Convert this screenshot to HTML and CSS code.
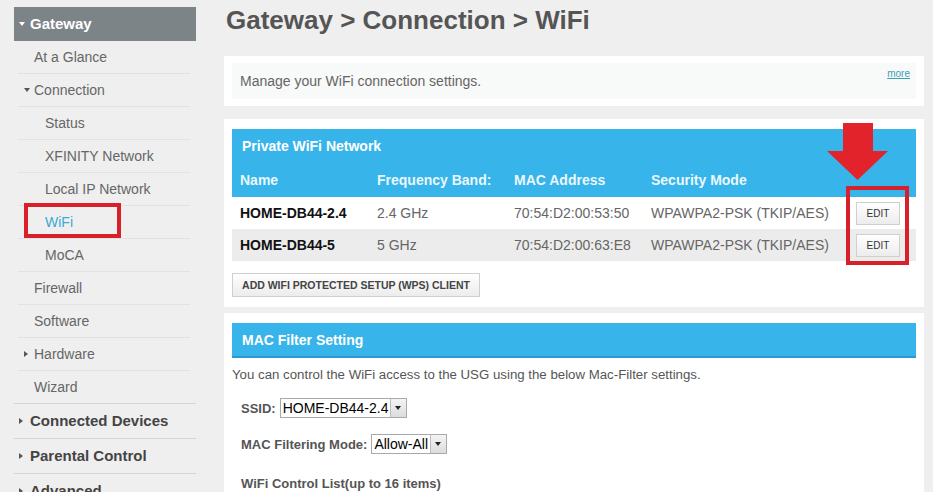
FILE: index.html
```html
<!DOCTYPE html>
<html lang="en">
<head>
    <meta charset="UTF-8">
    <title>Gateway > Connection > WiFi</title>
    <link rel="stylesheet" href="styles.css">
</head>
<body>
    <div class="page">
        <nav class="sidebar">
            <div class="nav-head"><span class="caret down light"></span>Gateway</div>
            <ul class="nav-sub">
                <li class="lvl1">At a Glance</li>
                <li class="lvl1 has-caret"><span class="caret down"></span>Connection</li>
                <li class="lvl2">Status</li>
                <li class="lvl2">XFINITY Network</li>
                <li class="lvl2">Local IP Network</li>
                <li class="lvl2 active">WiFi<span class="mark-box"></span></li>
                <li class="lvl2">MoCA</li>
                <li class="lvl1">Firewall</li>
                <li class="lvl1">Software</li>
                <li class="lvl1 has-caret"><span class="caret right"></span>Hardware</li>
                <li class="lvl1">Wizard</li>
            </ul>
            <ul class="nav-top">
                <li><span class="caret right dark"></span>Connected Devices</li>
                <li><span class="caret right dark"></span>Parental Control</li>
                <li><span class="caret right dark"></span>Advanced</li>
            </ul>
        </nav>

        <main class="content">
            <h1>Gateway &gt; Connection &gt; WiFi</h1>

            <div class="panel intro">
                <div class="intro-inner">
                    Manage your WiFi connection settings.
                    <a class="more" href="#">more</a>
                </div>
            </div>

            <div class="panel wifi">
                <div class="blue-head">
                    <div class="head-title">Private WiFi Network</div>
                    <div class="grid-row cols">
                        <span>Name</span>
                        <span>Frequency Band:</span>
                        <span>MAC Address</span>
                        <span>Security Mode</span>
                        <span></span>
                    </div>
                </div>
                <div class="grid-row data">
                    <span class="ssid">HOME-DB44-2.4</span>
                    <span>2.4 GHz</span>
                    <span>70:54:D2:00:53:50</span>
                    <span>WPAWPA2-PSK (TKIP/AES)</span>
                    <span><button class="btn edit">EDIT</button></span>
                </div>
                <div class="grid-row data odd">
                    <span class="ssid">HOME-DB44-5</span>
                    <span>5 GHz</span>
                    <span>70:54:D2:00:63:E8</span>
                    <span>WPAWPA2-PSK (TKIP/AES)</span>
                    <span><button class="btn edit">EDIT</button></span>
                </div>
                <button class="btn wps">ADD WIFI PROTECTED SETUP (WPS) CLIENT</button>

                <svg class="arrow" width="61" height="57" viewBox="0 0 61 57">
                    <polygon points="16,0 46,0 46,28 61,28 30.5,57 0,28 16,28" fill="#e3232b"/>
                </svg>
                <div class="edit-box"></div>
            </div>

            <div class="panel mac">
                <div class="blue-head single">
                    <div class="head-title">MAC Filter Setting</div>
                </div>
                <p class="note">You can control the WiFi access to the USG using the below Mac-Filter settings.</p>
                <div class="field ssid-field">
                    <label>SSID:</label>
                    <span class="fake-select"><span class="val">HOME-DB44-2.4</span><span class="drop"></span></span>
                </div>
                <div class="field mode-field">
                    <label>MAC Filtering Mode:</label>
                    <span class="fake-select"><span class="val">Allow-All</span><span class="drop"></span></span>
                </div>
                <div class="field list-title">WiFi Control List(up to 16 items)</div>
            </div>
        </main>
    </div>
</body>
</html>
```

FILE: styles.css
```css
body {
    margin: 0;
    background-color: #efefef;
    font-family: "Liberation Sans", Arial, sans-serif;
    color: #666;
    overflow: hidden;
}
.page {
    display: flex;
    padding-left: 14px;
}

/* sidebar */
.sidebar {
    width: 182px;
    padding-top: 7px;
}
.nav-head {
    height: 34px;
    line-height: 34px;
    background-color: #7d8488;
    color: #fff;
    font-size: 15px;
    font-weight: bold;
    padding-left: 5px;
}
.nav-sub, .nav-top {
    list-style: none;
    margin: 0;
    padding: 0;
}
.nav-sub li {
    position: relative;
    height: 32px;
    line-height: 32px;
    font-size: 14px;
    color: #666;
    border-bottom: 1px solid #e2e2e2;
    margin: 0 6px 0 4px;
}
.nav-sub li:last-child {
    border-bottom: 1px solid #d5d5d5;
    margin: 0;
    padding-left: 20px;
}
.nav-sub .lvl1 {
    padding-left: 16px;
}
.nav-sub .lvl1.has-caret {
    padding-left: 6px;
}
.nav-sub .lvl2 {
    padding-left: 27px;
}
.nav-sub .active {
    color: #3aa9d6;
}
.mark-box {
    position: absolute;
    left: 6px;
    top: -3px;
    width: 89px;
    height: 27px;
    border: 4px solid #d8202b;
}
.nav-top li {
    height: 34px;
    line-height: 34px;
    font-size: 15px;
    font-weight: bold;
    color: #444;
    padding-left: 5px;
    border-bottom: 1px solid #d5d5d5;
}

.caret {
    display: inline-block;
    width: 0;
    height: 0;
    vertical-align: middle;
    margin-right: 4px;
}
.caret.down {
    border-left: 3px solid transparent;
    border-right: 3px solid transparent;
    border-top: 4px solid #555;
    margin-top: -2px;
}
.caret.down.light {
    border-top-color: #fff;
    margin-right: 5px;
}
.caret.right {
    border-top: 3px solid transparent;
    border-bottom: 3px solid transparent;
    border-left: 4px solid #555;
    margin-top: -2px;
    margin-right: 6px;
}
.caret.right.dark {
    margin-right: 7px;
}

/* content */
.content {
    width: 700px;
    margin-left: 28px;
}
h1 {
    margin: 0 0 16px 2px;
    font-size: 26px;
    line-height: 40px;
    color: #555;
}
.panel {
    position: relative;
    background: #fff;
    padding: 10px 8px;
}
.intro {
    padding: 7px 8px;
    margin-bottom: 13px;
}
.intro-inner {
    position: relative;
    height: 36px;
    line-height: 36px;
    background-color: #f8f9f9;
    padding-left: 8px;
    font-size: 14px;
    color: #666;
}
.more {
    position: absolute;
    right: 6px;
    top: -7px;
    font-size: 10px;
    color: #3aa0b4;
}

.wifi {
    margin-bottom: 6px;
}
.blue-head {
    background-color: #37b4ea;
    color: #fff;
}
.head-title {
    height: 34px;
    line-height: 34px;
    padding-left: 10px;
    font-size: 14px;
    font-weight: bold;
}
.blue-head.single {
    border-bottom: 2px solid #2a9ad6;
}
.blue-head.single .head-title {
    height: 33px;
    line-height: 34px;
}
.grid-row {
    display: grid;
    grid-template-columns: 137px 137px 137px 205px 60px;
    padding-left: 8px;
    height: 32px;
    align-items: center;
    font-size: 14px;
}
.grid-row.cols {
    height: 34px;
    font-weight: bold;
    color: #eaf7fd;
}
.grid-row.data {
    color: #666;
}
.grid-row.odd {
    background-color: #ececec;
}
.ssid {
    color: #111;
    font-weight: bold;
}
.btn {
    font-family: "Liberation Sans", Arial, sans-serif;
    background: linear-gradient(#ffffff, #ececec);
    border: 1px solid #cfcfcf;
    color: #333;
    padding: 0;
}
.edit {
    width: 44px;
    height: 23px;
    font-size: 10px;
}
.wps {
    display: block;
    margin-top: 12px;
    width: 248px;
    height: 24px;
    font-size: 10.5px;
    font-weight: bold;
    color: #444;
}
.arrow {
    position: absolute;
    left: 603px;
    top: 4px;
}
.edit-box {
    position: absolute;
    left: 622px;
    top: 67px;
    width: 55px;
    height: 71px;
    border: 4px solid #d8202b;
}

.mac {
    height: 200px;
}
.note {
    margin: 8px 0 0 0;
    font-size: 13.25px;
    color: #555;
    line-height: 17px;
}
.field {
    display: flex;
    align-items: center;
    padding-left: 9px;
    font-size: 13px;
    font-weight: bold;
    color: #555;
}
.field label {
    margin-right: 4px;
}
.ssid-field {
    margin-top: 15px;
}
.mode-field {
    margin-top: 16px;
}
.list-title {
    margin-top: 22px;
}
.fake-select {
    display: inline-flex;
    border: 1px solid #a9a9a9;
    height: 18px;
    font-weight: normal;
    color: #000;
    font-size: 14px;
}
.fake-select .val {
    padding: 0 2px;
    line-height: 18px;
}
.fake-select .drop {
    position: relative;
    width: 15px;
    border-left: 1px solid #bdbdbd;
    background: linear-gradient(#f4f4f4, #dcdcdc);
}
.fake-select .drop::after {
    content: "";
    position: absolute;
    left: 4px;
    top: 7px;
    border-left: 3px solid transparent;
    border-right: 3px solid transparent;
    border-top: 4px solid #222;
}
```
